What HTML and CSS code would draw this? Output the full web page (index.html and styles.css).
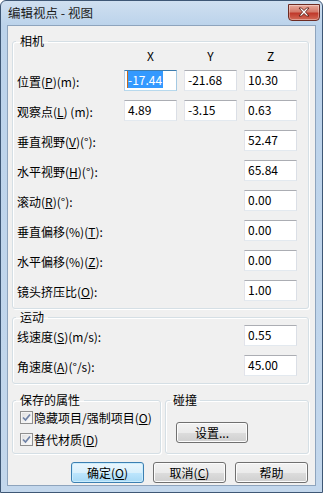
FILE: index.html
```html
<!DOCTYPE html>
<html lang="zh-CN">
<head>
<meta charset="utf-8">
<title>编辑视点 - 视图</title>
<link rel="stylesheet" href="styles.css">
</head>
<body>
<div class="window">
  <div class="titlebar">
    <span class="title">编辑视点 - 视图</span>
    <div class="close">
      <svg width="16" height="10" viewBox="0 0 16 10"><path d="M3 1 L5.5 1 L8 3.5 L10.5 1 L13 1 L9.5 5 L13 9 L10.5 9 L8 6.5 L5.5 9 L3 9 L6.5 5 Z" fill="#fff" stroke="#5a1f17" stroke-width="0.9" stroke-linejoin="round"/></svg>
    </div>
  </div>
  <div class="client">
    <fieldset class="group camera">
      <legend>相机</legend>
      <div class="grid grid3">
        <span></span><span class="hdr">X</span><span class="hdr">Y</span><span class="hdr">Z</span>
        <span class="lbl">位置(<u>P</u>)(m):</span>
        <div class="tb focus"><span class="sel">-17.44</span></div>
        <div class="tb">-21.68</div>
        <div class="tb">10.30</div>
        <span class="lbl">观察点(<u>L</u>) (m):</span>
        <div class="tb">4.89</div>
        <div class="tb">-3.15</div>
        <div class="tb">0.63</div>
        <span class="lbl span3">垂直视野(<u>V</u>)(°):</span>
        <div class="tb">52.47</div>
        <span class="lbl span3">水平视野(<u>H</u>)(°):</span>
        <div class="tb">65.84</div>
        <span class="lbl span3">滚动(<u>R</u>)(°):</span>
        <div class="tb">0.00</div>
        <span class="lbl span3">垂直偏移(%)(<u>T</u>):</span>
        <div class="tb">0.00</div>
        <span class="lbl span3">水平偏移(%)(<u>Z</u>):</span>
        <div class="tb">0.00</div>
        <span class="lbl span3">镜头挤压比(<u>O</u>):</span>
        <div class="tb">1.00</div>
      </div>
    </fieldset>
    <fieldset class="group motion">
      <legend>运动</legend>
      <div class="grid grid1">
        <span class="lbl">线速度(<u>S</u>)(m/s):</span>
        <div class="tb">0.55</div>
        <span class="lbl">角速度(<u>A</u>)(°/s):</span>
        <div class="tb">45.00</div>
      </div>
    </fieldset>
    <div class="row-groups">
      <fieldset class="group props">
        <legend>保存的属性</legend>
        <div class="check-row">
          <span class="cb"><svg width="9" height="9" viewBox="0 0 9 9"><path d="M1 4.5 L3.5 7 L8 1.5" fill="none" stroke="#6f82a6" stroke-width="1.7"/></svg></span>
          <span>隐藏项目/强制项目(<u>O</u>)</span>
        </div>
        <div class="check-row">
          <span class="cb"><svg width="9" height="9" viewBox="0 0 9 9"><path d="M1 4.5 L3.5 7 L8 1.5" fill="none" stroke="#6f82a6" stroke-width="1.7"/></svg></span>
          <span>替代材质(<u>D</u>)</span>
        </div>
      </fieldset>
      <fieldset class="group collide">
        <legend>碰撞</legend>
        <div class="btn set">设置...</div>
      </fieldset>
    </div>
    <div class="actions">
      <div class="btn default">确定(<u>O</u>)</div>
      <div class="btn">取消(<u>C</u>)</div>
      <div class="btn">帮助</div>
    </div>
  </div>
</div>
</body>
</html>
```

FILE: styles.css
```css
html, body {
  margin: 0;
  padding: 0;
}
body {
  width: 323px;
  height: 493px;
  overflow: hidden;
  font-family: "Noto Sans CJK SC", sans-serif;
  font-size: 12px;
  color: #000;
  background: #fff;
}
.window {
  box-sizing: border-box;
  width: 323px;
  height: 493px;
  border: 1px solid #3e5775;
  border-radius: 6px 6px 0 0;
  background: linear-gradient(#cfdff0, #bcd3eb 24px, #c3d7ec);
  padding: 0 6px 6px 6px;
  display: flex;
  flex-direction: column;
}
.titlebar {
  height: 24px;
  display: flex;
  align-items: center;
  justify-content: space-between;
  padding-left: 1px;
}
.title {
  line-height: 16px;
  font-size: 12.5px;
  color: #1a1a1a;
}
.close {
  box-sizing: border-box;
  width: 32px;
  height: 17px;
  margin-right: -4px;
  margin-top: -2px;
  border: 1px solid #6d2b22;
  border-radius: 0 0 4px 4px;
  background: linear-gradient(#e9a99b, #d47a6a 45%, #c0392b 55%, #d36b57);
  box-shadow: inset 0 0 0 1px rgba(255,255,255,0.35);
  display: flex;
  align-items: center;
  justify-content: center;
}
.client {
  flex: 1;
  border: 1px solid #8ea4bd;
  background: #f0f0f0;
  display: flex;
  flex-direction: column;
}
.group {
  border: 1px solid #d5dfe5;
  border-radius: 3px;
  box-shadow: inset 1px 1px 0 #fff, 1px 1px 0 #fff;
  min-width: 0;
}
.group legend {
  line-height: 16px;
  padding: 0 4px;
  margin-left: -1px;
}
.camera {
  margin: 7px 6px 0 4px;
  padding: 0 11px 7px 4px;
}
.motion {
  margin: 0 6px 0 4px;
  padding: 0 11px 7px 4px;
}
.grid {
  display: grid;
  column-gap: 7px;
  row-gap: 9px;
  grid-auto-rows: 21px;
}
.grid3 {
  grid-template-columns: 1fr 53px 53px 53px;
  grid-template-rows: 12px;
}
.grid3 .hdr {
  text-align: center;
  line-height: 13px;
  align-self: start;
}
.grid3 > :nth-child(-n+4) {
  margin-bottom: -9px;
}
.grid1 {
  grid-template-columns: 1fr 53px;
}
.lbl {
  line-height: 21px;
  padding-top: 1px;
  white-space: nowrap;
}
.span3 {
  grid-column: 1 / 4;
}
.tb {
  box-sizing: border-box;
  height: 21px;
  border: 1px solid;
  border-color: #abadb3 #dbdfe6 #e3e9ef #e2e3ea;
  background: #fff;
  padding: 0 3px;
  line-height: 18px;
  white-space: nowrap;
}
.tb.focus {
  border-color: #3d7bad #a4c9e3 #b7d9ed #b5cfe7;
  padding-left: 2px;
}
.sel {
  background: #3399ff;
  color: #fff;
  border-left: 1px solid #c46a1e;
  padding-right: 1px;
}
.row-groups {
  display: flex;
  gap: 4px;
  margin: 8px 6px 0 4px;
}
.props {
  width: 149px;
  box-sizing: border-box;
  margin: 0;
  padding: 0 4px 3px 7px;
}
.props legend {
  margin-left: -4px;
}
.collide {
  flex: 1;
  margin: 0;
  padding: 14px 10px 10px 10px;
}
.collide legend {
  margin-left: -6px;
  padding: 0 3px;
}
.check-row {
  display: flex;
  align-items: center;
  height: 19px;
  white-space: nowrap;
}
.check-row + .check-row {
  margin-top: 3px;
}
.cb {
  box-sizing: border-box;
  width: 13px;
  height: 13px;
  border: 1px solid #8f8f8f;
  background: linear-gradient(135deg, #dcdcdc, #ffffff);
  box-shadow: inset 0 0 0 1px #f4f4f4;
  display: flex;
  align-items: center;
  justify-content: center;
  margin-right: 1px;
}
.btn {
  box-sizing: border-box;
  height: 21px;
  border: 1px solid #707070;
  border-radius: 3px;
  background: linear-gradient(#f2f2f2, #ebebeb 50%, #dddddd 50%, #cfcfcf);
  box-shadow: inset 0 0 0 1px #fcfcfc;
  display: flex;
  align-items: center;
  justify-content: center;
  line-height: 16px;
}
.btn.default {
  border-color: #3c7fb1;
  background: linear-gradient(#eaf6fd, #d9f0fc 50%, #bee6fd 50%, #a7d9f5);
  box-shadow: inset 0 0 0 1px #c9ecfd;
}
.set {
  width: 72px;
}
.actions {
  display: flex;
  justify-content: flex-end;
  gap: 9px;
  margin: 8px 7px 0 0;
}
.actions .btn {
  width: 73px;
}
```
